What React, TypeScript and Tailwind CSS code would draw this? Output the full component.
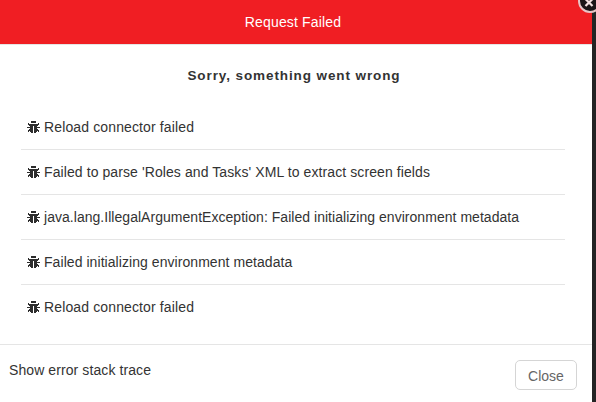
type Item = { text: string; spacing: string };

const items: Item[] = [
  { text: "Reload connector failed", spacing: "tracking-[0.13px]" },
  { text: "Failed to parse 'Roles and Tasks' XML to extract screen fields", spacing: "tracking-[0.09px]" },
  { text: "java.lang.IllegalArgumentException: Failed initializing environment metadata", spacing: "tracking-[0.035px]" },
  { text: "Failed initializing environment metadata", spacing: "tracking-[0.06px]" },
  { text: "Reload connector failed", spacing: "tracking-[0.13px]" },
];

function BugIcon() {
  return (
    <svg className="h-[13px] w-[13px] shrink-0" viewBox="0 0 13 13" fill="#2d2d2d" shapeRendering="crispEdges">
      <path d="M4 0h5v2H4z M2 3h9v2H2z M3 5h3v7H4v-1H3z M7 5h3v6H9v1H7z" />
      <path d="M1 2h1v2H1z M11 2h1v2h-1z M0 6h3v1H0z M10 6h3v1h-3z M2 8h1v2H2v1H1V9h1z M10 8h1v1h1v2h-1v-1h-1z" />
    </svg>
  );
}

export default function App() {
  return (
    <div className="relative flex h-[402px] w-[596px] overflow-hidden bg-[#242424] font-['Liberation_Sans',Arial,sans-serif] text-sm text-[#333]">
      <main className="flex w-[592px] flex-col bg-white">
        <header className="flex h-[45px] items-center justify-center border-b border-[#e5e5e5] bg-[#f01e23] pr-[6px] text-white">
          <h1 className="tracking-[0.15px]">Request Failed</h1>
        </header>
        <section className="flex h-[299px] flex-col px-[21px]">
          <h2 className="flex h-[60px] items-center justify-center pt-px pr-[4px] text-[13.5px] font-bold tracking-[0.9px]">Sorry, something went wrong</h2>
          <ul className="mr-[6px]">
            {items.map((item, i) => (
              <li key={i} className="flex h-[45px] items-center gap-1 border-b border-[#e5e5e5] pl-[6px] last:h-11 last:border-0">
                <BugIcon />
                <span className={`whitespace-nowrap ${item.spacing}`}>{item.text}</span>
              </li>
            ))}
          </ul>
        </section>
        <footer className="flex flex-1 items-start justify-between border-t border-[#e5e5e5] pt-[15px] pr-[15px] pl-[9px]">
          <span className="tracking-[0.09px]">Show error stack trace</span>
          <button className="h-[30px] w-[62px] rounded-[5px] border border-[#d5d5d5] bg-white pt-[2px] text-[#666]">Close</button>
        </footer>
      </main>
      <button aria-label="Close dialog" className="absolute -top-[11px] left-[578px] size-6 rounded-full border-2 border-[#e8c4c6] bg-[#1c1517]">
        <svg className="size-5" viewBox="0 0 20 20" stroke="#f4e0e0" strokeWidth="2.2">
          <path d="m5.5 8 7 7m0-7-7 7" />
        </svg>
      </button>
    </div>
  );
}
